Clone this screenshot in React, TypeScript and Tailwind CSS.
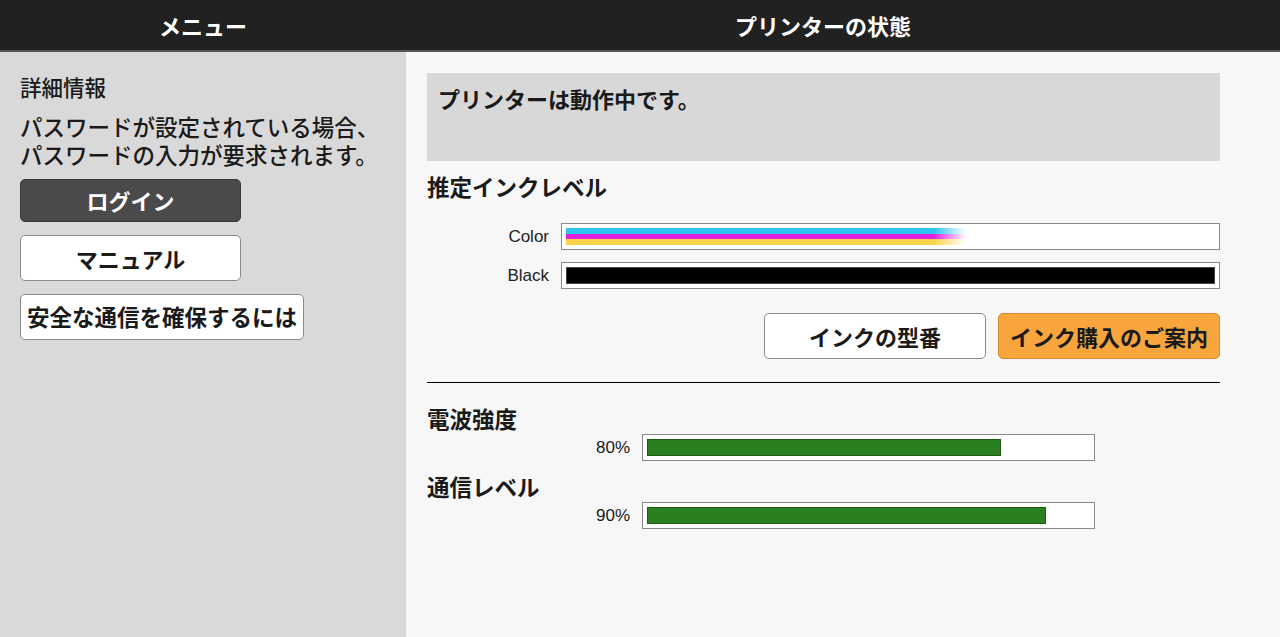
const jp = { fontFamily: '"Noto Sans CJK JP", "Noto Sans", sans-serif' };

const signals = [
  { label: '電波強度', value: 80 },
  { label: '通信レベル', value: 90 },
];

function InkRow({ name, children }: { name: string; children: React.ReactNode }) {
  return (
    <div className="flex items-center gap-[12px]">
      <div className="w-[122px] text-right text-[17px] text-[#222] font-['Liberation_Sans',sans-serif]">{name}</div>
      <div className="flex-1 h-[27px] border border-[#8a8a8a] bg-white p-[4px]">{children}</div>
    </div>
  );
}

export default function App() {
  return (
    <div className="w-[1280px] h-[637px] flex flex-col overflow-hidden text-[#1a1a1a]" style={jp}>
      {/* Header */}
      <div className="flex h-[52px] bg-[#212121] border-b-2 border-[#555] text-white text-[22px] font-bold shrink-0">
        <div className="w-[406px] flex items-center justify-center">メニュー</div>
        <div className="flex-1 flex items-center justify-center pr-[40px]">プリンターの状態</div>
      </div>

      <div className="flex flex-1 min-h-0">
        {/* Sidebar */}
        <aside className="w-[406px] bg-[#d9d9d9] px-[20px] pt-[21px] shrink-0">
          <div className="text-[21.5px] font-medium leading-[28px]">詳細情報</div>
          <p className="mt-[11px] text-[22.5px] font-medium leading-[28px]">
            パスワードが設定されている場合、<br />パスワードの入力が要求されます。
          </p>
          <div className="mt-[11px] flex flex-col items-start gap-[13px]">
            <button className="w-[221px] h-[43px] rounded-[5px] bg-[#4a4a4a] border border-[#3a3a3a] text-white text-[22px] font-bold">
              ログイン
            </button>
            <button className="w-[221px] h-[46px] rounded-[5px] bg-white border border-[#8a8a8a] text-[22px] font-bold">
              マニュアル
            </button>
            <button className="h-[46px] px-[6px] rounded-[5px] bg-white border border-[#8a8a8a] text-[22.5px] font-bold">
              安全な通信を確保するには
            </button>
          </div>
        </aside>

        {/* Main */}
        <main className="flex-1 bg-[#f7f7f7] pl-[21px] pr-[60px] pt-[21px]">
          <div className="h-[88px] bg-[#d8d8d8] px-[11px] pt-[11px] text-[22px] font-bold leading-[28px]">
            プリンターは動作中です。
          </div>

          <h2 className="mt-[10px] text-[22.5px] font-bold leading-[30px]">推定インクレベル</h2>

          <div className="mt-[22px] flex flex-col gap-[12px]">
            <InkRow name="Color">
              <div className="w-[400px] h-full flex flex-col [mask-image:linear-gradient(to_right,black_92%,transparent)]">
                <div className="flex-1 bg-[#2ec4ee]" />
                <div className="flex-1 bg-[#e01fe0]" />
                <div className="flex-1 bg-[#fcd44a]" />
              </div>
            </InkRow>
            <InkRow name="Black">
              <div className="w-full h-full bg-black border border-[#444]" />
            </InkRow>
          </div>

          <div className="mt-[24px] flex justify-end gap-[12px]">
            <button className="w-[222px] h-[46px] rounded-[5px] bg-white border border-[#8a8a8a] text-[22px] font-bold">
              インクの型番
            </button>
            <button className="w-[222px] h-[46px] rounded-[5px] bg-[#f9a53e] border border-[#d58a2d] text-[22px] font-bold">
              インク購入のご案内
            </button>
          </div>

          <hr className="mt-[23px] border-0 border-t border-black" />

          <div className="mt-[20px] flex flex-col">
            {signals.map(({ label, value }, i) => (
              <div key={label} className={i > 0 ? 'mt-[10px]' : ''}>
                <h3 className="text-[22.5px] font-bold leading-[30px]">{label}</h3>
                <div className="flex items-center gap-[12px] mt-[1px]">
                  <div className="w-[203px] text-right text-[17px] font-['Liberation_Sans',sans-serif]">{value}%</div>
                  <div className="w-[453px] h-[27px] border border-[#8a8a8a] bg-white p-[4px]">
                    <div className="h-full bg-[#2a7f1e] border border-[#1e5c15]" style={{ width: `${value}%` }} />
                  </div>
                </div>
              </div>
            ))}
          </div>
        </main>
      </div>
    </div>
  );
}
